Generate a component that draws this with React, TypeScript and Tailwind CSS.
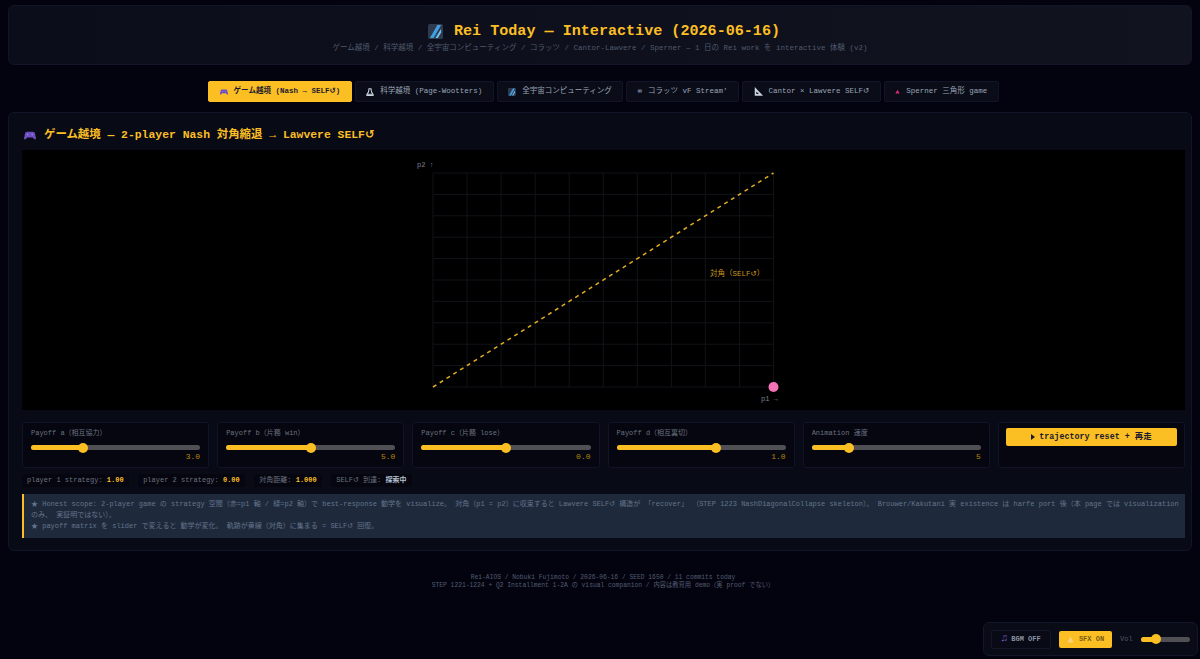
import React from "react";

const mono = { fontFamily: '"Liberation Mono","Noto Sans CJK JP",monospace' };

const Self = () => (
  <span>
    SELF<span className="font-['DejaVu_Sans',sans-serif]">↺</span>
  </span>
);

const Controller = ({ className = "" }: { className?: string }) => (
  <svg viewBox="0 0 16 12" className={className}>
    <path d="M4 1h8c1.500 0 2.300 1 2.700 2.500L16 9.500c.2 1.500-1.300 2.200-2.400 1.200L11.500 8.500h-7l-2.100 2.200C1.300 11.700-.2 11 0 9.500L1.300 3.500C1.700 2 2.500 1 4 1z" fill="#6d4fc0" />
    <circle cx="5" cy="4.500" r="1" fill="#a590e6" />
    <circle cx="11" cy="4.500" r="1" fill="#a590e6" />
  </svg>
);

const Comet = ({ className = "" }: { className?: string }) => (
  <svg viewBox="0 0 16 16" className={className}>
    <rect width="16" height="16" rx="2" fill="#2f3a4e" />
    <path d="M2 15 10 1h4L6 15z" fill="#3f9fe0" />
    <path d="M8 15 14 5v4l-3.500 6z" fill="#6cc4f2" />
  </svg>
);

const Microscope = ({ className = "" }: { className?: string }) => (
  <svg viewBox="0 0 12 12" className={className}>
    <path d="M4.500 1h3l.8 5 2.200 3.500h-9L3.700 6z" fill="none" stroke="#cbd5e1" strokeWidth="1.600" />
    <path d="M.5 10h11v2H.5z" fill="#cbd5e1" />
  </svg>
);

const Ruler = ({ className = "" }: { className?: string }) => (
  <svg viewBox="0 0 12 12" className={className}>
    <path d="M1 0v11.500h11z" fill="#cbd5e1" />
    <path d="M3.200 6v3.300h3.300z" fill="#0a0c18" />
  </svg>
);

const Triangle = ({ className = "" }: { className?: string }) => (
  <svg viewBox="0 0 8 8" className={className}>
    <path d="M4 1 7.500 7H.5z" fill="#db2777" />
  </svg>
);

const tabs: { icon: React.ReactNode; label: React.ReactNode; active?: boolean }[] = [
  { icon: <Controller className="w-[8px] h-[6px]" />, label: <>ゲーム越境 (Nash → <Self />)</>, active: true },
  { icon: <Microscope className="w-[8px] h-[8px]" />, label: "科学越境 (Page-Wootters)" },
  { icon: <Comet className="w-[8px] h-[8px]" />, label: "全宇宙コンピューティング" },
  { icon: <span className="text-[7px] text-slate-300">∞</span>, label: "コラッツ vF Stream'" },
  { icon: <Ruler className="w-[9px] h-[9px]" />, label: <>Cantor × Lawvere <Self /></> },
  { icon: <Triangle className="w-[5px] h-[5px]" />, label: "Sperner 三角形 game" },
];

const sliders = [
  { label: "Payoff a（相互協力）", value: "3.0", pct: 31 },
  { label: "Payoff b（片務 win）", value: "5.0", pct: 50 },
  { label: "Payoff c（片務 lose）", value: "0.0", pct: 50 },
  { label: "Payoff d（相互裏切）", value: "1.0", pct: 59 },
  { label: "Animation 速度", value: "5", pct: 22 },
];

const stats: { label: React.ReactNode; value: string; light?: boolean }[] = [
  { label: "player 1 strategy: ", value: "1.00" },
  { label: "player 2 strategy: ", value: "0.00" },
  { label: "対角距離: ", value: "1.000" },
  { label: <><Self /> 到達: </>, value: "探索中", light: true },
];

const Track = ({ pct, className = "" }: { pct: number; className?: string }) => (
  <div className={`relative h-[5px] rounded-full bg-[#505054] ${className}`}>
    <div className="h-full rounded-full bg-[#fbbf24]" style={{ width: `${pct}%` }} />
    <div
      className="absolute top-[-2.500px] w-[10px] h-[10px] -ml-[5px] rounded-full bg-[#fbbf24]"
      style={{ left: `${pct}%` }}
    />
  </div>
);

const Chart = () => {
  const x0 = 411;
  const y0 = 23;
  const w = 340.500;
  const h = 214;
  const cols = Array.from({ length: 11 }, (_, i) => i);
  return (
    <svg viewBox="0 0 1163 260" className="w-full h-[260px] block bg-black">
      {cols.map((i) => (
        <g key={i} stroke="#111319" strokeWidth="1">
          <line x1={x0 + (w * i) / 10} y1={y0} x2={x0 + (w * i) / 10} y2={y0 + h} />
          <line x1={x0} y1={y0 + (h * i) / 10} x2={x0 + w} y2={y0 + (h * i) / 10} />
        </g>
      ))}
      <line
        x1={x0}
        y1={y0 + h}
        x2={x0 + w}
        y2={y0}
        stroke="#fbbf24"
        strokeOpacity="0.9"
        strokeWidth="1.500"
        strokeDasharray="4 4"
      />
      <circle cx={x0 + w} cy={y0 + h} r="5" fill="#f472b6" />
      <text x="395" y="17" fontSize="7" fill="#7b828e" style={mono}>p2 ↑</text>
      <text x="739" y="251" fontSize="7" fill="#7b828e" style={mono}>p1 →</text>
      <text x="688" y="126" fontSize="7.500" fill="#c8981e" style={mono}>
        対角（SELF<tspan fontFamily="DejaVu Sans">↺</tspan>）
      </text>
    </svg>
  );
};

export default function App() {
  return (
    <div className="min-h-[659px] bg-[#03030f] px-2 pt-[5px] pb-[72px]" style={mono}>
      <header className="h-[60px] rounded-[6px] border border-[#12152a] bg-linear-to-r from-[#0b0d1a] to-[#11131f] flex flex-col items-center pt-[15px]">
        <h1 className="flex items-center gap-[11px] pl-[8px] text-[15.100px] leading-[20px] font-bold text-[#fbbf24]">
          <Comet className="w-[15px] h-[15px]" />
          <span>Rei Today — Interactive (2026-06-16)</span>
        </h1>
        <p className="mt-[1px] text-[7.500px] leading-[12px] text-[#4f5a6c]">
          ゲーム越境 / 科学越境 / 全宇宙コンピューティング / コラッツ / Cantor-Lawvere / Sperner — 1 日の Rei work を interactive 体験 (v2)
        </p>
      </header>

      <nav className="mt-4 flex justify-center gap-[3px] pl-[7px]">
        {tabs.map((t, i) => (
          <button
            key={i}
            className={`h-[21px] px-[10.500px] flex items-center gap-[6px] rounded-[2px] border text-[7.500px] whitespace-nowrap ${
              t.active
                ? "bg-[#fbbf24] border-[#fbbf24] text-[#1e1b2e] font-bold"
                : "bg-[#0a0c18] border-[#12152a] text-[#9aa5b6]"
            }`}
          >
            {t.icon}
            <span>{t.label}</span>
          </button>
        ))}
      </nav>

      <main className="mt-[10px] rounded-[6px] border border-[#12152a] bg-[#080a16] pt-[14px] pl-[13px] pr-[6px] pb-[12px]">
        <h2 className="flex items-center gap-[8px] h-[16px] pl-[2px] text-[11.400px] font-bold text-[#fbbf24]">
          <Controller className="w-[12px] h-[9px]" />
          <span>ゲーム越境 — 2-player Nash 対角縮退 → Lawvere <Self /></span>
        </h2>

        <div className="mt-[7px]">
          <Chart />
        </div>

        <div className="mt-3 grid grid-cols-6 gap-2">
          {sliders.map((s) => (
            <div key={s.label} className="h-[46px] rounded-[3px] border border-[#10132a] bg-[#05060f] px-[8px] pt-[5px]">
              <div className="text-[7px] leading-[11px] text-[#6b7280]">{s.label}</div>
              <Track pct={s.pct} className="mt-[6px]" />
              <div className="mt-[2px] text-right text-[8px] leading-[10px] text-[#b8860b]">{s.value}</div>
            </div>
          ))}
          <div className="h-[46px] rounded-[3px] border border-[#10132a] bg-[#05060f] px-[7px] pt-[5px]">
            <button className="w-full h-[18px] flex items-center justify-center gap-[4px] rounded-[2px] bg-[#fbbf24] text-[8.400px] font-bold text-[#1e1b2e]">
              <svg viewBox="0 0 4 6" className="w-[4px] h-[6px]"><path d="M0 0 4 3 0 6z" fill="#1e1b2e" /></svg>
              trajectory reset + 再走
            </button>
          </div>
        </div>

        <div className="mt-[6px] flex items-center gap-[9.500px]">
          {stats.map((s, i) => (
            <div key={i} className="h-[13px] px-[5px] flex items-center rounded-[2px] bg-[#05060f] text-[7px] text-[#6b7280] whitespace-pre">
              <span>{s.label}</span>
              <b className={s.light ? "text-[#b6c2d2]" : "text-[#fbbf24]"}>{s.value}</b>
            </div>
          ))}
        </div>

        <div className="mt-[7px] h-[44px] border-l-2 border-[#fbbf24] bg-[#1e293b] pl-[7px] pr-[4px] pt-[5px] text-[7px] leading-[11px] text-[#64748b]">
          <p>
            ★ Honest scope: 2-player game の strategy 空間（赤=p1 軸 / 緑=p2 軸）で best-response 動学を visualize。 対角（p1 = p2）に収束すると Lawvere <Self /> 構造が 「recover」 （STEP 1223 NashDiagonalCollapse skeleton）。 Brouwer/Kakutani 実 existence は harfe port 後（本 page では visualization のみ、 実証明ではない）。
          </p>
          <p>★ payoff matrix を slider で変えると 動学が変化。 軌跡が黄線（対角）に集まる = <Self /> 回復。</p>
        </div>
      </main>

      <footer className="mt-[23px] pl-[6px] text-center text-[6.300px] leading-[7.500px] text-[#525c70]">
        <p>Rei-AIOS / Nobuki Fujimoto / 2026-06-16 / SEED 1650 / 11 commits today</p>
        <p>STEP 1221-1224 + Q2 Installment 1-2A の visual companion / 内容は教育用 demo（実 proof でない）</p>
      </footer>

      <div className="fixed right-[2px] bottom-[3px] w-[215px] h-[34px] rounded-[6px] border border-[#14172a] bg-[#090b17] flex items-center pl-[7px] text-[7px]">
        <button className="w-[60px] h-[19px] flex items-center justify-center gap-[4px] rounded-[2px] border border-[#14172a] bg-[#080a16] font-bold text-[#8b93a3]">
          <span className="text-[10px] leading-none text-[#7c5cd0]">♫</span>
          BGM OFF
        </button>
        <button className="ml-[8px] w-[53px] h-[17px] flex items-center justify-center gap-[5px] rounded-[2px] bg-[#fbbf24] font-bold text-[#7a5c10]">
          <svg viewBox="0 0 8 8" className="w-[7px] h-[7px]"><path d="M4 .5 7.500 7.500H.5z" fill="#fcd27a" /></svg>
          SFX ON
        </button>
        <span className="ml-[8px] text-[#4f5666]">Vol</span>
        <Track pct={32} className="ml-[8px] w-[49px]" />
      </div>
    </div>
  );
}
